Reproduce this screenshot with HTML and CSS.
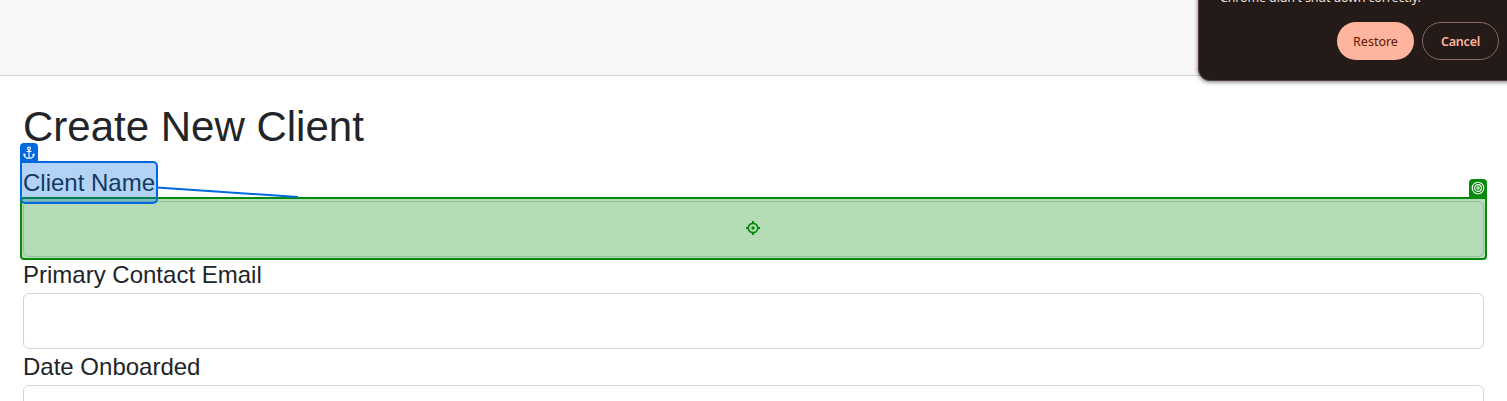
FILE: index.html
```html
<!DOCTYPE html>
<html lang="en">
<head>
<meta charset="utf-8">
<title>Create New Client</title>
<link rel="stylesheet" href="styles.css">
</head>
<body>
<header class="navbar"></header>
<main class="content">
  <h1 class="title">Create New Client</h1>
  <form class="form">
    <label class="label" for="name">Client Name</label>
    <input class="input" id="name">
    <label class="label" for="email">Primary Contact Email</label>
    <input class="input" id="email">
    <label class="label" for="date">Date Onboarded</label>
    <input class="input" id="date">
  </form>
</main>

<div class="target">
  <span class="target-tag">
    <svg width="14" height="14" viewBox="0 0 14 14" fill="none" stroke="#fff" stroke-width="1.1"><circle cx="7" cy="7" r="5.8"/><circle cx="7" cy="7" r="3.4"/><circle cx="7" cy="7" r="1.2"/></svg>
  </span>
  <svg class="crosshair" width="14" height="14" viewBox="0 0 14 14" fill="none" stroke="#058a0c"><circle cx="7" cy="7" r="4.700" stroke-width="1.700"/><circle cx="7" cy="7" r="1.700" fill="#058a0c" stroke="none"/><path d="M7 0v2.500M7 11.500v2.500M0 7h2.500M11.500 7h2.500" stroke-width="2"/></svg>
</div>
<div class="anchor">
  <span class="anchor-tag">
    <svg width="12" height="14" viewBox="0 0 12 14" fill="none" stroke="#fff" stroke-width="1.1"><circle cx="6" cy="2.500" r="1.400"/><path d="M6 3.800v8.500M3.500 5.500h5M1 8.300c.4 2.500 2.200 4 5 4s4.600-1.500 5-4M.6 9.600l.5-1.500 1.600.9M11.400 9.600l-.5-1.500-1.600.9"/></svg>
  </span>
</div>
<svg class="connector" width="142" height="14" viewBox="0 0 142 14"><path d="M0 3.500L141 13" fill="none" stroke="#0069e0" stroke-width="2"/></svg>

<aside class="bubble">
  <p class="bubble-text">Chrome didn't shut down correctly.</p>
  <div class="bubble-actions">
    <button class="btn btn-primary">Restore</button>
    <button class="btn btn-outline">Cancel</button>
  </div>
</aside>
</body>
</html>
```
FILE: styles.css
```css
* { box-sizing: border-box; }
html, body { height: 100%; }
body {
  margin: 0;
  overflow: hidden;
  position: relative;
  background: #fff;
  color: #212529;
  font-family: "Liberation Sans", Arial, sans-serif;
}
.navbar {
  height: 76px;
  background: #f7f7f7;
  border-bottom: 1px solid #d3d3d3;
}
.content {
  height: calc(100% - 76px);
  padding: 26px 23px 0;
  overflow: hidden;
}
.title {
  margin: 0 0 13px;
  font-size: 42px;
  line-height: 50px;
  font-weight: 400;
}
.form { display: flex; flex-direction: column; }
.label { font-size: 24px; line-height: 36px; height: 36px; }
.input {
  height: 56px;
  width: 100%;
  padding: 8px 16px;
  border: 1px solid #ced4da;
  border-radius: 6px;
  background: #fff;
  font-size: 24px;
}
.target {
  position: absolute;
  left: 20px;
  top: 197px;
  width: 1467px;
  height: 63px;
  display: flex;
  align-items: center;
  justify-content: center;
  padding: 0 1px 1px 0;
  border: 2px solid #058a0c;
  border-radius: 4px 0 4px 4px;
  background: rgba(5, 138, 12, 0.3);
}
.target-tag {
  position: absolute;
  right: -2px;
  top: -20px;
  width: 18px;
  height: 18px;
  display: flex;
  align-items: center;
  justify-content: center;
  border-radius: 4px 4px 0 0;
  background: #058a0c;
}
.crosshair { display: block; }
.anchor {
  position: absolute;
  left: 20px;
  top: 161px;
  width: 138px;
  height: 43px;
  border: 2px solid #0069e0;
  border-radius: 0 5px 5px 5px;
  background: rgba(0, 105, 224, 0.3);
}
.anchor-tag {
  position: absolute;
  left: -2px;
  top: -20px;
  width: 18px;
  height: 18px;
  display: flex;
  align-items: center;
  justify-content: center;
  padding-top: 1px;
  border-radius: 4px 4px 0 0;
  background: #0069e0;
}
.connector { position: absolute; left: 157px; top: 184px; }
.bubble {
  position: absolute;
  left: 1198px;
  top: -40px;
  width: 330px;
  height: 121px;
  padding: 27px 28px 0 21px;
  border: 1px solid #54413c;
  border-radius: 12px;
  background: #241a17;
  box-shadow: 0 1px 4px rgba(0, 0, 0, 0.55);
  font-family: "Noto Sans", sans-serif;
}
.bubble-text {
  margin: 0;
  height: 34px;
  color: #ede0dc;
  font-size: 12.5px;
  line-height: 20px;
  letter-spacing: -0.14px;
}
.bubble-actions { display: flex; justify-content: flex-end; gap: 8px; }
.btn {
  width: 77px;
  height: 38px;
  padding: 0;
  border-radius: 19px;
  font: 400 12.5px "Noto Sans", sans-serif;
}
.btn-primary { border: 0; background: #ffb59d; color: #5d1900; }
.btn-outline {
  border: 1px solid #85695f;
  background: transparent;
  color: #ffb59d;
  font-weight: 600;
  letter-spacing: -0.2px;
}
```
